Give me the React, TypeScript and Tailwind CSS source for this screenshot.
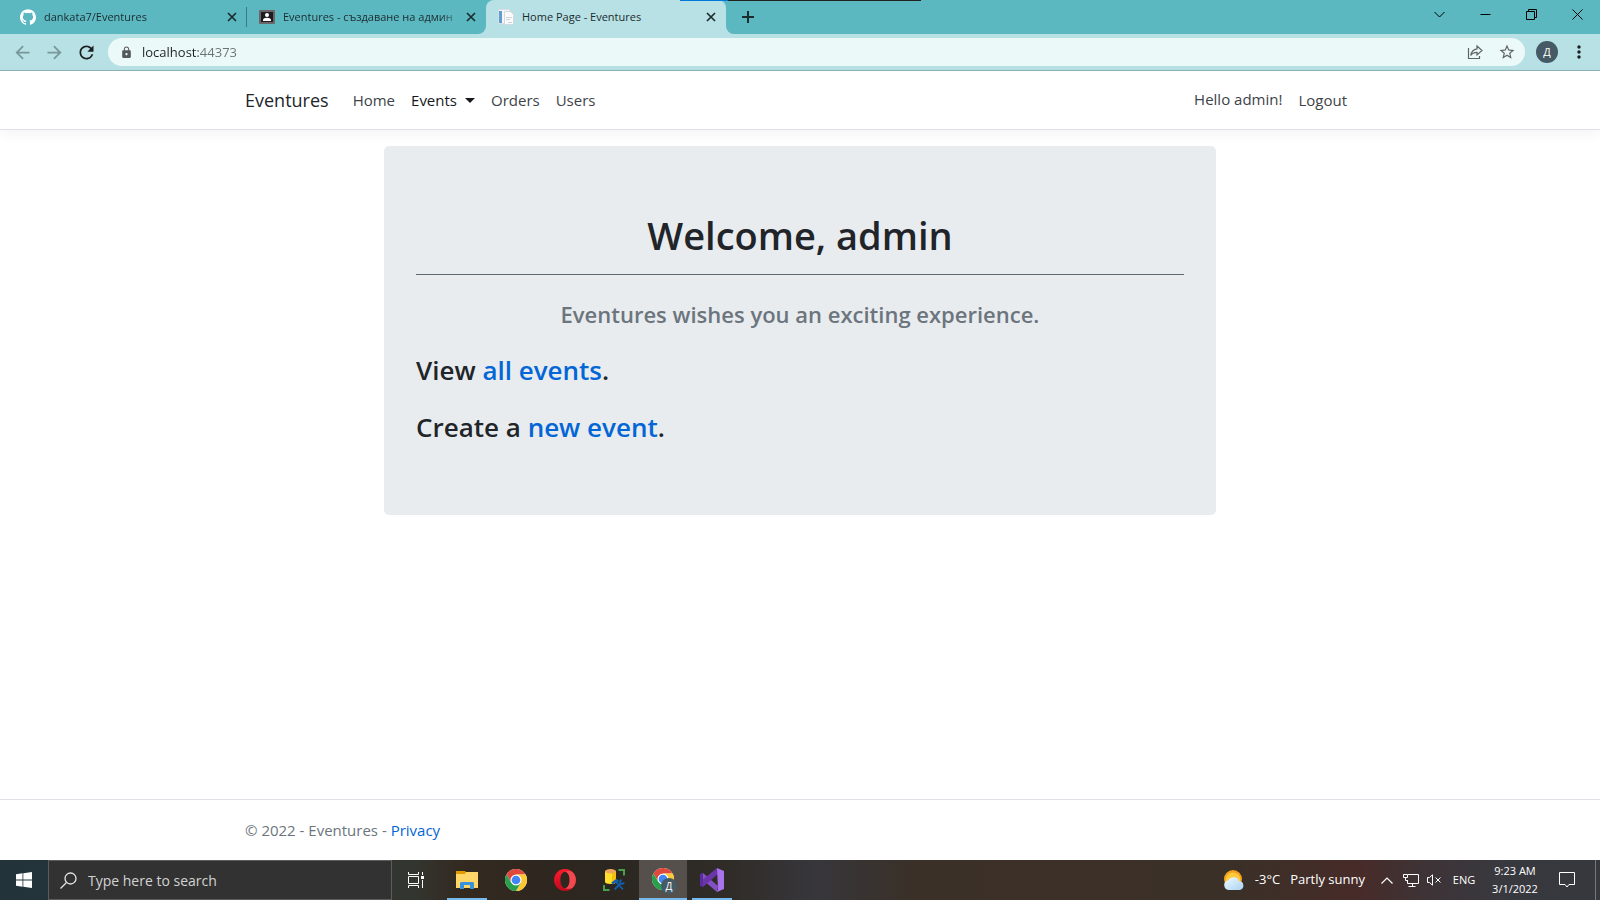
import type { ReactNode } from "react";
import { MdArrowBack, MdArrowForward, MdRefresh, MdLock, MdStarBorder, MdMoreVert } from "react-icons/md";

function GithubMark() {
  return (
    <svg viewBox="0 0 24 24" className="size-4 shrink-0 fill-white" aria-hidden="true">
      <path d="M12 .297c-6.63 0-12 5.373-12 12 0 5.303 3.438 9.8 8.205 11.385.6.113.82-.258.82-.577 0-.285-.01-1.04-.015-2.04-3.338.724-4.042-1.61-4.042-1.61C4.422 18.07 3.633 17.7 3.633 17.7c-1.087-.744.084-.729.084-.729 1.205.084 1.838 1.236 1.838 1.236 1.07 1.835 2.809 1.305 3.495.998.108-.776.417-1.305.76-1.605-2.665-.3-5.466-1.332-5.466-5.93 0-1.31.465-2.38 1.235-3.22-.135-.303-.54-1.523.105-3.176 0 0 1.005-.322 3.3 1.23.96-.267 1.98-.399 3-.405 1.02.006 2.04.138 3 .405 2.28-1.552 3.285-1.23 3.285-1.23.645 1.653.24 2.873.12 3.176.765.84 1.23 1.91 1.23 3.22 0 4.61-2.805 5.625-5.475 5.92.42.36.81 1.096.81 2.22 0 1.606-.015 2.896-.015 3.286 0 .315.21.69.825.57C20.565 22.092 24 17.592 24 12.297c0-6.627-5.373-12-12-12" />
    </svg>
  );
}

function ClassroomIcon() {
  return (
    <svg viewBox="0 0 16 16" className="size-4 shrink-0" aria-hidden="true">
      <rect x="0" y="1" width="16" height="14" rx="1" fill="#6b6468" />
      <rect x="2" y="3" width="12" height="10" fill="#1d1a20" />
      <circle cx="8" cy="6" r="2" fill="#fff" />
      <path d="M4 12v-1.2C4 9.4 6 8.700 8 8.700s4 .7 4 2.100V12z" fill="#fff" />
    </svg>
  );
}

function PageIcon() {
  return (
    <svg viewBox="0 0 16 16" className="size-4 shrink-0" aria-hidden="true">
      <rect x=".5" y=".5" width="11" height="14" fill="#f4f6fa" stroke="#d5dde6" />
      <rect x="1" y="2" width="3" height="12" fill="#5e9fd0" />
      <path d="M6.500 2.500h6l3 3v10h-9z" fill="#fafafa" stroke="#d3d7de" />
      <path d="M8 8.500h6M8 10.500h4M10 13.500h4" stroke="#cdd1d8" />
    </svg>
  );
}

function CloseMark() {
  return (
    <svg viewBox="0 0 10 10" className="size-[10px] stroke-[#1c2b2e]" strokeWidth="1.700" aria-hidden="true">
      <path d="M1 1l8 8M9 1L1 9" />
    </svg>
  );
}

function Tab({ icon, title, active, divider }: { icon: ReactNode; title: string; active?: boolean; divider?: boolean }) {
  return (
    <div
      role="tab"
      aria-selected={!!active}
      className={
        active
          ? "flex h-full w-60 items-center rounded-t-lg bg-[#b8e1e5] pl-3"
          : "flex h-full w-[239px] items-center pl-3"
      }
    >
      {icon}
      <span
        className={
          active
            ? "ml-2 flex-1 whitespace-nowrap"
            : "ml-2 flex-1 whitespace-nowrap [mask-image:linear-gradient(90deg,#000_88%,transparent)]"
        }
      >
        {title}
      </span>
      <button type="button" aria-label={`Close ${title}`} className="flex size-4 items-center justify-center">
        <CloseMark />
      </button>
      <span className={divider ? "ml-[6px] h-5 w-px bg-[#3b7a80]" : "ml-[6px] h-5 w-px"} />
    </div>
  );
}

function WindowButton({ label, children }: { label: string; children: ReactNode }) {
  return (
    <button type="button" aria-label={label} className="flex h-7 w-[46px] items-center justify-center">
      <svg viewBox="0 0 11 11" className="size-[11px] fill-none stroke-black" aria-hidden="true">
        {children}
      </svg>
    </button>
  );
}

function BrowserChrome() {
  return (
    <header className="relative text-[#1c2b2e]">
      <div className="flex h-[34px] bg-[#5bb8c1]">
        <div role="tablist" className="flex w-[726px] shrink-0 pl-2 text-[11px]">
          <Tab icon={<GithubMark />} title="dankata7/Eventures" divider />
          <Tab icon={<ClassroomIcon />} title="Eventures - създаване на админ" />
          <Tab icon={<PageIcon />} title="Home Page - Eventures" active />
        </div>
        <svg viewBox="0 0 8 8" className="size-2 shrink-0 self-end" aria-hidden="true">
          <path d="M0 0a8 8 0 0 0 8 8H0z" fill="#b8e1e5" />
        </svg>
        <button type="button" aria-label="New tab" className="flex w-7 items-center justify-center">
          <svg viewBox="0 0 12 12" className="size-3 stroke-[#1c2b2e]" strokeWidth="2" aria-hidden="true">
            <path d="M6 0v12M0 6h12" />
          </svg>
        </button>
        <div className="ml-auto flex">
          <WindowButton label="Search tabs">
            <path d="M.5 3l5 5 5-5" />
          </WindowButton>
          <WindowButton label="Minimize">
            <path d="M.5 5.500h10" />
          </WindowButton>
          <WindowButton label="Restore">
            <path d="M.5 2.500h8v8h-8zM2.500 2.500v-2h8v8h-2" />
          </WindowButton>
          <WindowButton label="Close">
            <path d="M.5.5l10 10M10.500.5l-10 10" />
          </WindowButton>
        </div>
      </div>
      <svg viewBox="0 0 8 8" className="absolute top-[26px] left-[478px] size-2" aria-hidden="true">
        <path d="M8 0a8 8 0 0 1-8 8h8z" fill="#b8e1e5" />
      </svg>
      <div className="absolute top-0 left-[680px] flex h-px w-[241px]">
        <span className="w-12 bg-[#0078d7]" />
        <span className="flex-1 bg-[#222222]" />
      </div>
      <div className="flex h-[37px] items-center border-b border-[#8db3b8] bg-[#b8e1e5] pr-[11px] pl-2">
        <button type="button" aria-label="Back" className="flex w-7 justify-center text-[#76979b]">
          <MdArrowBack size={21} />
        </button>
        <button type="button" aria-label="Forward" className="ml-1 flex w-7 justify-center text-[#76979b]">
          <MdArrowForward size={21} />
        </button>
        <button type="button" aria-label="Reload" className="ml-1 flex w-7 justify-center text-[#1c2022]">
          <MdRefresh size={21} />
        </button>
        <div className="ml-2 flex h-7 flex-1 items-center rounded-full bg-[#ecf9f9] pr-1 pl-3">
          <MdLock size={13} className="shrink-0 text-[#55595c]" />
          <input
            aria-label="Address"
            defaultValue="localhost:44373"
            className="ml-[9px] min-w-0 flex-1 bg-[linear-gradient(90deg,#202124_56px,#6a7174_56px)] bg-clip-text pt-[2px] text-[13px] text-transparent outline-none"
          />
          <button type="button" aria-label="Share this page" className="flex w-9 justify-center">
            <svg viewBox="0 0 16 16" className="size-4 fill-none stroke-[#5f6368]" strokeWidth="1.200" aria-hidden="true">
              <path d="M1.500 4v10.500h11V12" />
              <path d="M10 2l5 4.500L10 11V8.300C7 8.300 5 9.300 3.800 11.500 4.300 7.800 6.500 5.300 10 4.800z" />
            </svg>
          </button>
          <button type="button" aria-label="Bookmark this page" className="flex w-7 justify-center text-[#5f6368]">
            <MdStarBorder size={18} />
          </button>
        </div>
        <button
          type="button"
          aria-label="Profile"
          className="ml-[11px] flex size-[22px] items-center justify-center rounded-full bg-[#455a64] text-[11px] text-white"
        >
          Д
        </button>
        <button type="button" aria-label="Menu" className="ml-[11px] flex w-5 justify-center text-[#1c2022]">
          <MdMoreVert size={20} />
        </button>
      </div>
    </header>
  );
}

function Navbar() {
  return (
    <nav className="relative border-b border-[#dee2e6] bg-white shadow-[0_4px_12px_rgba(0,0,0,0.05)]">
      <div className="mx-auto flex h-[58px] max-w-[1140px] items-center px-[15px] text-[15px] text-[#3d4349]">
        <a href="#home" className="mr-4 text-[18px] text-[#212529]">
          Eventures
        </a>
        <a href="#home" className="px-2">Home</a>
        <button type="button" aria-haspopup="menu" className="flex items-center px-2 text-[#16181b]">
          Events
          <span className="ml-2 border-x-5 border-t-5 border-x-transparent border-t-[#16181b]" />
        </button>
        <a href="#orders" className="px-2">Orders</a>
        <a href="#users" className="px-2">Users</a>
        <div className="ml-auto flex items-center">
          <span className="px-2 pb-[2px]">Hello admin!</span>
          <a href="#logout" className="px-2">Logout</a>
        </div>
      </div>
    </nav>
  );
}

function TaskButton({ label, children, open, active }: { label: string; children: ReactNode; open?: boolean; active?: boolean }) {
  return (
    <button
      type="button"
      aria-label={label}
      className={
        active
          ? "relative flex h-10 w-12 items-center justify-center border-b-2 border-[#76b9ed] bg-[#55504c]"
          : "relative flex h-10 w-12 items-center justify-center"
      }
    >
      {children}
      {open && <span className="absolute inset-x-1 bottom-0 h-[2px] bg-[#76b9ed]" />}
    </button>
  );
}

function ChromeLogo() {
  return (
    <svg viewBox="0 0 48 48" className="size-[22px]" aria-hidden="true">
      <circle cx="24" cy="24" r="24" fill="#fff" />
      <path d="M24 12h20.800A24 24 0 0 0 3.200 12l10.400 18A12 12 0 0 1 24 12z" fill="#e0483c" />
      <path d="M34.400 30L24 48A24 24 0 0 0 44.800 12H24a12 12 0 0 1 10.400 18z" fill="#fcc934" />
      <path d="M13.600 30L3.200 12A24 24 0 0 0 24 48l10.400-18a12 12 0 0 1-20.800 0z" fill="#2aa04c" />
      <circle cx="24" cy="24" r="9.500" fill="#4285f4" />
    </svg>
  );
}

function Taskbar() {
  return (
    <footer className="flex h-10 bg-[linear-gradient(90deg,#22343a_0%,#26363a_12%,#33352f_26%,#33291f_29%,#2b2620_38%,#302d29_46%,#37363b_51%,#3a3028_57%,#3d3028_66%,#3a3028_77%,#472b29_85%,#3e3336_89%,#38393f_94%,#37383d_100%)] text-white">
      <button type="button" aria-label="Start" className="flex w-12 items-center justify-center">
        <svg viewBox="0 0 16 16" className="size-4 fill-white" aria-hidden="true">
          <path d="M0 2.200L6.500 1.300v6.300H0zM7.300 1.200L16 0v7.600H7.300zM0 8.400h6.500v6.300L0 13.800zM7.300 8.400H16V16l-8.700-1.200z" />
        </svg>
      </button>
      <label className="flex w-[344px] items-center border border-[#5c5c5c] bg-[#323232] pl-[11px]">
        <svg viewBox="0 0 17 17" className="size-[17px] fill-none stroke-[#e6e6e6]" strokeWidth="1.300" aria-hidden="true">
          <circle cx="10.500" cy="6.500" r="5.500" />
          <path d="M6.500 10.500L.5 16.500" />
        </svg>
        <input
          aria-label="Type here to search"
          placeholder="Type here to search"
          className="ml-[11px] min-w-0 flex-1 text-[14px] outline-none placeholder:text-[#d2d2d2]"
        />
      </label>
      <div className="flex gap-px">
        <TaskButton label="Task View">
          <svg viewBox="0 0 16 16" className="size-4 fill-none stroke-white" aria-hidden="true">
            <path d="M.5 0v2.500h10V0M.5 4.500h10v7H.5zM.5 16v-2.500h10V16M14.500 0v3M14.500 8v8" />
            <path d="M13 4h3v3h-3z" fill="#fff" stroke="none" />
          </svg>
        </TaskButton>
        <span className="w-px" />
        <TaskButton label="File Explorer" open>
          <svg viewBox="0 0 22 18" className="h-[18px] w-[22px]" aria-hidden="true">
            <path d="M0 0h9l1 1v3H0z" fill="#e29a00" />
            <path d="M0 3h9l1-2h12v16H0z" fill="#ffd667" />
            <path d="M4 18v-6l1-1h12l1 1v6h-4v-4H8v4z" fill="#3593de" />
          </svg>
        </TaskButton>
        <TaskButton label="Google Chrome">
          <ChromeLogo />
        </TaskButton>
        <TaskButton label="Opera">
          <svg viewBox="0 0 22 22" className="size-[22px]" aria-hidden="true">
            <defs>
              <linearGradient id="opera" x1="0" y1="0" x2="0" y2="1">
                <stop offset="0" stopColor="#ff1b2d" />
                <stop offset="1" stopColor="#bd0a1c" />
              </linearGradient>
            </defs>
            <path fillRule="evenodd" d="M11 0a11 11 0 1 0 0 22 11 11 0 0 0 0-22zm0 2.800c2.800 0 4.600 3.600 4.600 8.200s-1.800 8.200-4.600 8.200S6.400 15.600 6.400 11 8.200 2.800 11 2.800z" fill="url(#opera)" />
            <path d="M11 2.800c2.800 0 4.600 3.600 4.600 8.200s-1.800 8.200-4.600 8.200c2 1 5 .8 7.400-.2a11 11 0 0 0 0-16C16 1.600 13 1.600 11 2.800z" fill="#ee4a50" />
          </svg>
        </TaskButton>
        <TaskButton label="SQL Server Management Studio">
          <svg viewBox="0 0 22 22" className="size-[22px]" aria-hidden="true">
            <path d="M2 2v11c0 1.200 2.500 2 5.500 2s5.500-.8 5.500-2V2z" fill="#ffdf2b" />
            <path d="M9 3v11.900c2.300-.2 4-.9 4-1.900V2z" fill="#f3c20c" />
            <ellipse cx="7.500" cy="2.200" rx="5.500" ry="2.200" fill="#eda65c" />
            <path d="M15.500 1H21v5.500M1 16v5h5.500" fill="none" stroke="#47a04b" strokeWidth="2" />
            <g fill="none" stroke="#0f5fae" strokeWidth="1.800">
              <path d="M12.500 12.500l7.500 8M11.500 20.500l6-6" />
              <path d="M9 14.500l4.500-3.200 1.800 1.500" strokeWidth="2.400" />
              <path d="M18.500 10.500l-1.500 2 .3 2 2 .5 2-1.500" />
            </g>
          </svg>
        </TaskButton>
        <TaskButton label="Google Chrome, Home Page" active>
          <ChromeLogo />
          <span className="absolute right-[10px] bottom-1 flex size-4 items-center justify-center rounded-full bg-[#455a64] text-[10px] leading-none">
            Д
          </span>
        </TaskButton>
        <TaskButton label="Visual Studio" open>
          <svg viewBox="0 0 24 24" className="size-6" aria-hidden="true">
            <path d="M0 6.500L3 5l15 13-1 6L3 12z" fill="#8450c8" />
            <path d="M0 17.500L3 19 18 6l-1-6L0 14z" fill="#6a35a8" />
            <path d="M0 6.500L3 5v14l-3-1.500z" fill="#5b2c9c" />
            <path d="M17 0l7 3v18l-7 3 1-3z" fill="#a974ea" />
          </svg>
          <span className="absolute right-1 bottom-0 h-[2px] w-2 bg-[#4f7fa8]" />
        </TaskButton>
      </div>
      <div className="ml-auto flex items-center">
        <button type="button" className="flex items-center text-[13px]">
          <svg viewBox="0 0 22 20" className="mr-[10px] h-5 w-[22px]" aria-hidden="true">
            <defs>
              <linearGradient id="cloud" x1="0" y1="0" x2="1" y2="1">
                <stop offset="0" stopColor="#f2faff" />
                <stop offset="1" stopColor="#a9d2f3" />
              </linearGradient>
            </defs>
            <circle cx="10" cy="9" r="9" fill="#f7a01c" />
            <circle cx="10" cy="10" r="7.500" fill="#ffc93c" />
            <path d="M5.500 20a5 5 0 0 1-.5-9.800A6.500 6.500 0 0 1 16.300 11a4.600 4.600 0 0 1 .7 9z" fill="url(#cloud)" />
          </svg>
          <span className="mr-[10px]">-3°C</span>
          <span>Partly sunny</span>
        </button>
        <button type="button" aria-label="Show hidden icons" className="ml-4 flex w-3">
          <svg viewBox="0 0 12 7" className="h-[7px] w-3 fill-none stroke-white" strokeWidth="1.200" aria-hidden="true">
            <path d="M.5 6.500L6 1l5.500 5.500" />
          </svg>
        </button>
        <button type="button" aria-label="Network" className="ml-[10px] flex">
          <svg viewBox="0 0 16 13" className="h-[13px] w-4 fill-none stroke-white" aria-hidden="true">
            <path d="M5 .5h10.500v9h-11V6M.5.500h4v3h-4zM2.500 4v2.500h2M9.500 9.500v3M5.500 12.500h7" />
          </svg>
        </button>
        <button type="button" aria-label="Volume muted" className="ml-2 flex">
          <svg viewBox="0 0 15 12" className="h-3 w-[15px] fill-none stroke-white" aria-hidden="true">
            <path d="M.5 3.500h2L5.500.8v10.400L2.500 8.500h-2zM8.500 3.500l5 5M13.500 3.500l-5 5" />
          </svg>
        </button>
        <button type="button" className="ml-[10px] w-6 text-center text-[11px]">ENG</button>
        <button type="button" className="ml-3 w-[54px] text-center text-[11px] leading-[18px] whitespace-nowrap">
          9:23 AM
          <br />
          3/1/2022
        </button>
        <button type="button" aria-label="Notifications" className="ml-4 flex w-[18px] justify-center">
          <svg viewBox="0 0 16 16" className="size-4 fill-none stroke-white" aria-hidden="true">
            <path d="M.5.5h15v12H10l-2 2.500-2-2.500H.5z" />
          </svg>
        </button>
        <span className="ml-[19px] h-10 w-px bg-[#77787c]" />
        <button type="button" aria-label="Show desktop" className="h-10 w-1" />
      </div>
    </footer>
  );
}

export default function App() {
  return (
    <div className="flex min-h-screen flex-col bg-white font-['Open_Sans','Noto_Sans',sans-serif] text-[#212529]">
      <BrowserChrome />
      <Navbar />
      <main className="flex-1 px-4 pt-4">
        <section className="mx-auto max-w-[832px] rounded-[5px] bg-[#e9ecef] px-8 pt-16 pb-[72px]">
          <h1 className="text-center text-[38px] leading-[50px] font-semibold">Welcome, admin</h1>
          <hr className="mt-[14px] border-[#5f6971]" />
          <p className="mt-[23px] text-center text-[22px] leading-8 font-semibold text-[#6c757d]">
            Eventures wishes you an exciting experience.
          </p>
          <h2 className="mt-6 text-[26px] leading-8 font-semibold">
            View <a href="#events" className="text-[#0366d6]">all events</a>.
          </h2>
          <h2 className="mt-[25px] text-[26px] leading-8 font-semibold">
            Create a <a href="#create" className="text-[#0366d6]">new event</a>.
          </h2>
        </section>
      </main>
      <div className="border-t border-[#dee2e6]">
        <div className="mx-auto flex h-[60px] max-w-[1140px] items-center px-[15px] text-[15px] text-[#6c757d]">
          <p>
            © 2022 - Eventures - <a href="#privacy" className="text-[#0366d6]">Privacy</a>
          </p>
        </div>
      </div>
      <Taskbar />
    </div>
  );
}
